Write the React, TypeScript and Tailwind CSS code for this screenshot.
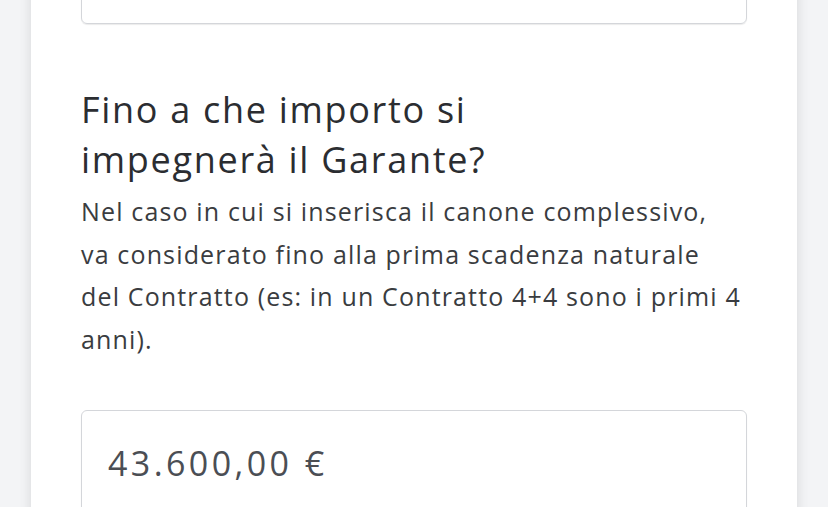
export default function App() {
  return (
    <div className="h-[507px] overflow-hidden bg-[#f3f4f6] font-['Open_Sans',sans-serif]">
      <div className="mx-[31px] -mt-[60px] bg-white px-[50px] pb-10 shadow-[0_0_12px_rgba(0,0,0,0.12)]">
        <div className="h-[84px] rounded-md border border-[#d4d6da] shadow-[0_1px_1px_rgba(0,0,0,0.08)]" />

        <h2 className="mt-[61px] text-[36px] leading-[50px] tracking-[1.7px] text-[#2b2d31]">
          Fino a che importo si
          <br />
          impegnerà il Garante?
        </h2>
        <p className="mt-[5px] whitespace-nowrap text-[25px] leading-[42.5px] tracking-[1.15px] text-[#3a3c40]">
          Nel caso in cui si inserisca il canone complessivo,
          <br />
          va considerato fino alla prima scadenza naturale
          <br />
          del Contratto (es: in un Contratto 4+4 sono i primi 4
          <br />
          anni).
        </p>

        <div className="mt-[50px] flex h-[106px] items-center rounded-md border border-[#d4d6da] px-[26px] shadow-[0_1px_1px_rgba(0,0,0,0.08)]">
          <span className="text-[34px] tracking-[3.4px] text-[#4b4e54]">43.600,00 €</span>
        </div>
      </div>
    </div>
  );
}
